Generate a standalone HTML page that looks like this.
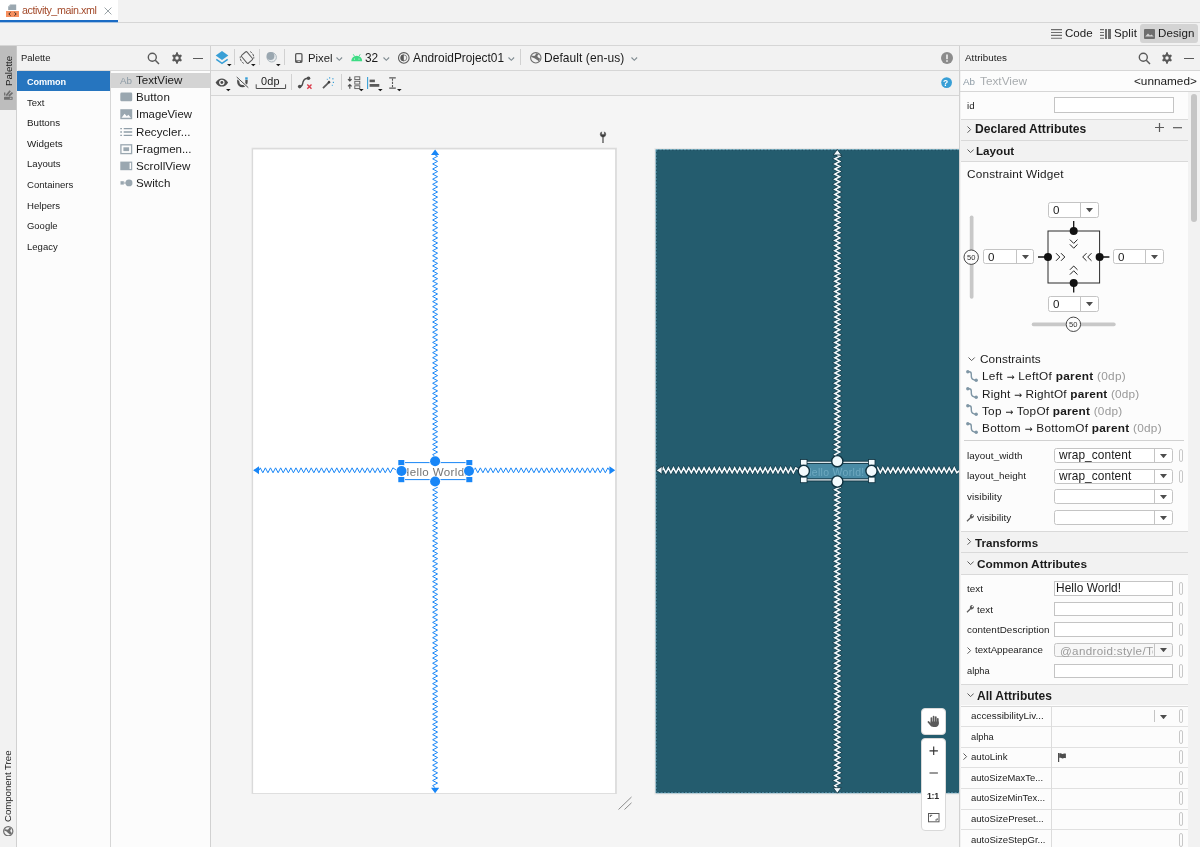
<!DOCTYPE html><html><head><meta charset="utf-8"><title>activity_main.xml</title><style>html,body{margin:0;padding:0;background:#f2f2f2;}#app{position:relative;width:1200px;height:847px;overflow:hidden;background:#f2f2f2;font-family:"Liberation Sans", sans-serif;}#app div,#app svg,#app span.t{position:absolute;display:block;box-sizing:border-box;}#app span.t{white-space:pre;line-height:1;will-change:transform;}#app span.t b{font-weight:700;}</style></head><body><div id="app">
<div style="left:0px;top:0px;width:117.8px;height:20px;background:#ffffff;"></div>
<div style="left:0px;top:20px;width:117.8px;height:2px;background:#1a6bc4;"></div>
<div style="left:0px;top:22px;width:117.8px;height:0.5px;background:#1a6bc4;opacity:.35;"></div>
<div style="left:117.5px;top:22px;width:1082.5px;height:1px;background:#d6d6d6;"></div>
<svg style="left:6px;top:4px;" width="13" height="13" viewBox="0 0 13 13"><path d="M4.200 .4h6v5.600H2.200V2.400z" fill="#9aa7b0"/><path d="M2.200 2.400h2V.4z" fill="#c3cbd0"/><rect x="0" y="7" width="13" height="6" fill="#f26522" opacity=".72"/><path d="M4.600 8.300 2.800 10l1.800 1.700M8.400 8.300l1.800 1.700-1.800 1.700" stroke="#3b2a20" stroke-width="1" fill="none"/></svg>
<span class="t" id="t0" style="left:22.3px;top:5.2px;font-size:10.73px;color:#a34a2b;letter-spacing:-0.424px;">activity_main.xml</span>
<svg style="left:103.5px;top:6.5px;" width="8" height="8" viewBox="0 0 8 8"><path d="M.6 .6l6.800 6.800M7.400 .6l-6.800 6.800" stroke="#8e989d" stroke-width=".9"/></svg>
<div style="left:0px;top:45px;width:1200px;height:1px;background:#d6d6d6;"></div>
<div style="left:1140px;top:24px;width:58px;height:19px;background:#d4d4d4;border-radius:3px;"></div>
<svg style="left:1051px;top:28.5px;" width="11" height="10" viewBox="0 0 11 10"><path d="M0 .6h11M0 3.5h11M0 6.4h11M0 9.3h11" stroke="#6e6e6e" stroke-width="1.1"/></svg>
<span class="t" id="t1" style="left:1064.8px;top:28.2px;font-size:11.58px;color:#1a1a1a;letter-spacing:0.003px;">Code</span>
<svg style="left:1100px;top:28.5px;" width="11" height="10" viewBox="0 0 11 10"><path d="M0 .6h4M0 3.5h4M0 6.4h4M0 9.3h4" stroke="#6e6e6e" stroke-width="1.1"/><rect x="5" y="0" width="2" height="10" fill="#6e6e6e"/><rect x="8" y="0" width="3" height="10" fill="#6e6e6e"/></svg>
<span class="t" id="t2" style="left:1113.8px;top:28.2px;font-size:11.58px;color:#1a1a1a;letter-spacing:0.094px;">Split</span>
<svg style="left:1144px;top:28.5px;" width="11" height="10" viewBox="0 0 11 10"><rect x="0" y="0" width="11" height="10" rx="1" fill="#6e6e6e"/><path d="M1.2 7.6 4 4.6l2 2 1.4-1.2 2.4 2.2z" fill="#d4d4d4"/></svg>
<span class="t" id="t3" style="left:1157.8px;top:28.2px;font-size:11.58px;color:#1a1a1a;letter-spacing:0.059px;">Design</span>
<div style="left:0px;top:46px;width:16px;height:63.5px;background:#bdbdbd;"></div>
<div style="left:16px;top:46px;width:1px;height:63.5px;background:#c9c9c9;"></div>
<span class="t" id="t4" style="left:4.3px;top:86.3px;font-size:9.7px;color:#1a1a1a;transform-origin:0 0;transform:rotate(-90deg);letter-spacing:0.004px;">Palette</span>
<svg style="left:0px;top:0px;" width="1200" height="847" viewBox="0 0 1200 847"><rect x="4" y="96.800" width="8.600" height="3" rx=".6" fill="#6e6e6e"/><rect x="9.800" y="97.700" width="1.800" height="1.200" fill="#bdbdbd"/><path d="M6.300 95.600 10.200 90.800M8.800 96 12.500 92.700" stroke="#6e6e6e" stroke-width="1.700"/><path d="M4.700 95.400v-3" stroke="#6e6e6e" stroke-width="1.300"/></svg>
<span class="t" id="t5" style="left:3.4px;top:821.5px;font-size:9.6px;color:#1a1a1a;transform-origin:0 0;transform:rotate(-90deg);letter-spacing:0.002px;">Component Tree</span>
<svg style="left:3px;top:825.5px;" width="10.5" height="10.5" viewBox="0 0 10.5 10.5"><circle cx="5.25" cy="5.25" r="4.6" fill="none" stroke="#6e6e6e" stroke-width="1.2"/><path d="M1.5 3.5c1.5-.5 2.5.5 3.5 0s1-2 2-2l1.5 1.5c-1 .5-1.5 1.5-1 2.5s1.500 1 1.5 2L7 9c-.5-1.500-2-1.500-2.500-2.500S3 5 1.500 5z" fill="#6e6e6e"/></svg>
<div style="left:16px;top:109.5px;width:1px;height:737.5px;background:#d1d1d1;"></div>
<div style="left:17px;top:70.5px;width:193px;height:776.5px;background:#fcfcfc;"></div>
<div style="left:17.5px;top:70px;width:192.5px;height:0.6px;background:#d9d9d9;"></div>
<div style="left:110px;top:70.5px;width:1px;height:776.5px;background:#d6d6d6;"></div>
<div style="left:210px;top:46px;width:1px;height:801px;background:#d1d1d1;"></div>
<span class="t" id="t6" style="left:21px;top:53.2px;font-size:9.48px;color:#1a1a1a;letter-spacing:0.002px;">Palette</span>
<svg style="left:147px;top:51.5px;" width="13" height="13" viewBox="0 0 13 13"><circle cx="5.3" cy="5.3" r="4" fill="none" stroke="#5a5a5a" stroke-width="1.4"/><path d="M8.300 8.300 12 12" stroke="#5a5a5a" stroke-width="1.500"/></svg>
<svg style="left:170.5px;top:52px;" width="12" height="12" viewBox="0 0 12 12"><g fill="#5a5a5a"><path d="M6.500 0h-1.500l-.4 1.700a4 4 0 0 0-1.200.7L1.800 1.800.8 3.500l1.300 1.200a4 4 0 0 0 0 1.400L.8 7.300l1 1.700 1.600-.6a4 4 0 0 0 1.200.7L5 10.800h1.500z" transform="translate(.25 .6)"/><path d="M5 0h1.500l.4 1.700a4 4 0 0 1 1.200.7l1.600-.6 1 1.700-1.300 1.200a4 4 0 0 1 0 1.400l1.300 1.200-1 1.700-1.600-.6a4 4 0 0 1-1.200.7L6.500 10.800H5z" transform="translate(.25 .6)"/></g><circle cx="6" cy="6" r="1.700" fill="#f2f2f2"/></svg>
<div style="left:193px;top:57.5px;width:10px;height:1.3px;background:#5a5a5a;"></div>
<div style="left:17px;top:70.5px;width:93px;height:20px;background:#2675bf;"></div>
<span class="t" id="t7" style="left:26.5px;top:78.2px;font-size:9.12px;color:#ffffff;font-weight:700;letter-spacing:-0.081px;">Common</span>
<span class="t" id="t8" style="left:26.5px;top:98.2px;font-size:9.49px;color:#1a1a1a;letter-spacing:-0.002px;">Text</span>
<span class="t" id="t9" style="left:26.5px;top:118.2px;font-size:9.76px;color:#1a1a1a;letter-spacing:0.003px;">Buttons</span>
<span class="t" id="t10" style="left:26.5px;top:139.2px;font-size:9.84px;color:#1a1a1a;letter-spacing:0.026px;">Widgets</span>
<span class="t" id="t11" style="left:26.5px;top:159.2px;font-size:9.57px;color:#1a1a1a;">Layouts</span>
<span class="t" id="t12" style="left:26.5px;top:180.2px;font-size:9.58px;color:#1a1a1a;letter-spacing:-0.003px;">Containers</span>
<span class="t" id="t13" style="left:26.5px;top:201.2px;font-size:9.61px;color:#1a1a1a;letter-spacing:0.005px;">Helpers</span>
<span class="t" id="t14" style="left:26.5px;top:221.2px;font-size:9.46px;color:#1a1a1a;letter-spacing:0.003px;">Google</span>
<span class="t" id="t15" style="left:26.5px;top:242.2px;font-size:9.53px;color:#1a1a1a;letter-spacing:0.002px;">Legacy</span>
<div style="left:110.5px;top:72.5px;width:99.5px;height:15.5px;background:#d4d4d4;"></div>
<span class="t" id="t16" style="left:136.1px;top:75.2px;font-size:11.58px;color:#1a1a1a;letter-spacing:0.034px;">TextView</span>
<span class="t" id="t17" style="left:136.1px;top:92.2px;font-size:11.58px;color:#1a1a1a;letter-spacing:0.069px;">Button</span>
<span class="t" id="t18" style="left:136.1px;top:109.2px;font-size:11.34px;color:#1a1a1a;letter-spacing:0.006px;">ImageView</span>
<span class="t" id="t19" style="left:136.1px;top:127.2px;font-size:11.58px;color:#1a1a1a;letter-spacing:0.032px;">Recycler...</span>
<span class="t" id="t20" style="left:136.1px;top:144.2px;font-size:11.48px;color:#1a1a1a;letter-spacing:0.005px;">Fragmen...</span>
<span class="t" id="t21" style="left:136.1px;top:161.2px;font-size:11.58px;color:#1a1a1a;letter-spacing:0.056px;">ScrollView</span>
<span class="t" id="t22" style="left:136.1px;top:178.2px;font-size:11.58px;color:#1a1a1a;letter-spacing:0.048px;">Switch</span>
<span class="t" id="t23" style="left:120px;top:76.2px;font-size:9.88px;color:#8d9ba5;letter-spacing:-0.147px;">Ab</span>
<svg style="left:120px;top:92.2px;" width="13" height="11" viewBox="0 0 13 11"><rect x=".3" y=".6" width="11.900" height="8.600" rx="1.300" fill="#9aa7b0"/></svg>
<svg style="left:120px;top:109.4px;" width="13" height="11" viewBox="0 0 13 11"><path d="M.3 .2h11.900v10H.3z" fill="#9aa7b0"/><path d="M1.500 8.700 4.600 4.700l2.200 2.600 1.500-1.500 2.700 2.900z" fill="#fcfcfc"/></svg>
<svg style="left:120px;top:126.6px;" width="13" height="11" viewBox="0 0 13 11"><path d="M.3 1.700h1.600M.3 5h1.600M.3 8.300h1.600M3.700 1.700h8.500M3.700 5h8.500M3.700 8.300h8.500" stroke="#8f9da7" stroke-width="1.300"/></svg>
<svg style="left:120px;top:143.8px;" width="13" height="11" viewBox="0 0 13 11"><rect x=".9" y=".8" width="10.700" height="8.800" fill="none" stroke="#9aa7b0" stroke-width="1.300"/><rect x="3.400" y="3.300" width="5.700" height="3.800" fill="#9aa7b0"/></svg>
<svg style="left:120px;top:161.0px;" width="13" height="11" viewBox="0 0 13 11"><rect x=".3" y=".6" width="11.900" height="8.600" fill="#9aa7b0"/><rect x="9.600" y="1.800" width="1.500" height="6.200" fill="#fcfcfc"/></svg>
<svg style="left:120px;top:178.2px;" width="13" height="11" viewBox="0 0 13 11"><rect x=".5" y="3.200" width="3.300" height="3.400" fill="#9aa7b0"/><rect x="3.800" y="3.800" width="2.500" height="2.200" fill="#9aa7b0" opacity=".55"/><circle cx="9" cy="4.900" r="3.450" fill="#9aa7b0"/></svg>
<div style="left:210.5px;top:70px;width:749.5px;height:1px;background:#d6d6d6;"></div>
<div style="left:210.5px;top:95px;width:749.5px;height:1px;background:#d6d6d6;"></div>
<svg style="left:0px;top:0px;" width="1200" height="847" viewBox="0 0 1200 847"><path d="M222 51 228.300 55.500 222 60 215.700 55.500z" fill="#389fd6"/><path d="M216.300 59.300 222 63.400 227.700 59.300" fill="none" stroke="#389fd6" stroke-width="1.500"/></svg>
<svg style="left:226.5px;top:63.8px;" width="5" height="3" viewBox="0 0 5 3"><path d="M0 0h4.600L2.300 2.300z" fill="#1a1a1a"/></svg>
<div style="left:234px;top:49px;width:1px;height:16px;background:#d1d1d1;"></div>
<svg style="left:0px;top:0px;" width="1200" height="847" viewBox="0 0 1200 847"><g fill="none" stroke="#5a5a5a" stroke-width="1"><rect x="243.450" y="52.300" width="7.100" height="10.400" rx="1.200" transform="rotate(-40 247 57.500)"/><path d="M250.200 51.600A6.800 6.800 0 0 1 253.700 58.600M243.800 63.400A6.800 6.800 0 0 1 240.300 56.400" stroke-dasharray="2.600 .7"/></g></svg>
<svg style="left:250.7px;top:63.8px;" width="5" height="3" viewBox="0 0 5 3"><path d="M0 0h4.600L2.300 2.300z" fill="#1a1a1a"/></svg>
<div style="left:259px;top:49px;width:1px;height:16px;background:#d1d1d1;"></div>
<svg style="left:0px;top:0px;" width="1200" height="847" viewBox="0 0 1200 847"><circle cx="271.700" cy="57.300" r="4.700" fill="#e6eaec" stroke="#aab5bc" stroke-width="1"/><circle cx="270.500" cy="56" r="3.900" fill="#9aa7b0"/></svg>
<svg style="left:276.0px;top:63.8px;" width="5" height="3" viewBox="0 0 5 3"><path d="M0 0h4.600L2.300 2.300z" fill="#1a1a1a"/></svg>
<div style="left:284px;top:49px;width:1px;height:16px;background:#d1d1d1;"></div>
<svg style="left:295.3px;top:52.8px;" width="8" height="10" viewBox="0 0 8 10"><rect x=".65" y=".65" width="6.300" height="8.600" rx="1" fill="none" stroke="#5a5a5a" stroke-width="1.300"/><rect x=".65" y="7.300" width="6.300" height="2" fill="#5a5a5a"/><rect x="2.600" y="8" width="2.400" height=".7" fill="#f2f2f2"/></svg>
<span class="t" id="t24" style="left:307.5px;top:53.2px;font-size:11.31px;color:#1a1a1a;">Pixel</span>
<svg style="left:336px;top:57.4px;" width="7" height="4.5" viewBox="0 0 7 4.5"><path d="M.5 .5 3.300 3.300 6.100 .5" fill="none" stroke="#7f8b91" stroke-width="1.100"/></svg>
<svg style="left:351px;top:54px;" width="11.5" height="7.5" viewBox="0 0 11.5 7.5"><path d="M.3 7.200A5.450 5.450 0 0 1 11.200 7.200z" fill="#3ddc84"/><path d="M2.300 .3 3.600 2.500M9.200 .3 7.900 2.500" stroke="#3ddc84" stroke-width=".9"/><circle cx="3.500" cy="5" r=".6" fill="#f2f2f2"/><circle cx="8" cy="5" r=".6" fill="#f2f2f2"/></svg>
<span class="t" id="t25" style="left:365.1px;top:53.2px;font-size:11.87px;color:#1a1a1a;letter-spacing:-0.002px;">32</span>
<svg style="left:383px;top:57.4px;" width="7" height="4.5" viewBox="0 0 7 4.5"><path d="M.5 .5 3.300 3.300 6.100 .5" fill="none" stroke="#7f8b91" stroke-width="1.100"/></svg>
<svg style="left:0px;top:0px;" width="1200" height="847" viewBox="0 0 1200 847"><circle cx="403.800" cy="57.900" r="5.300" fill="none" stroke="#5a5a5a" stroke-width="1.100"/><path d="M403.800 54.600a3.300 3.300 0 0 0 0 6.600z" fill="#5a5a5a"/><circle cx="403.800" cy="57.900" r="3" fill="none" stroke="#5a5a5a" stroke-width=".7"/></svg>
<span class="t" id="t26" style="left:412.5px;top:53.2px;font-size:11.87px;color:#1a1a1a;letter-spacing:0.001px;">AndroidProject01</span>
<svg style="left:507.5px;top:57.4px;" width="7" height="4.5" viewBox="0 0 7 4.5"><path d="M.5 .5 3.300 3.300 6.100 .5" fill="none" stroke="#7f8b91" stroke-width="1.100"/></svg>
<div style="left:520px;top:49px;width:1px;height:16px;background:#d1d1d1;"></div>
<svg style="left:529.5px;top:52px;" width="12" height="12" viewBox="0 0 12 12"><circle cx="5.800" cy="5.800" r="5.200" fill="none" stroke="#6e6e6e" stroke-width="1.100"/><path d="M1.300 3.800c1.600-.4 2.400.4 3.400 0s.8-2.200 2-2.600l2.200 1c-1.400.8-1.800 1.800-1.200 2.800s2 .8 2.400 1.800l-1.400 2.600c-.8-1.600-2.200-1.400-3-2.400s-2.400-1-4.400-2z" fill="#6e6e6e"/></svg>
<span class="t" id="t27" style="left:544px;top:52.2px;font-size:11.99px;color:#1a1a1a;letter-spacing:0.069px;">Default (en-us)</span>
<svg style="left:631px;top:57.4px;" width="7" height="4.5" viewBox="0 0 7 4.5"><path d="M.5 .5 3.300 3.300 6.100 .5" fill="none" stroke="#7f8b91" stroke-width="1.100"/></svg>
<svg style="left:940.5px;top:52px;" width="12" height="12" viewBox="0 0 12 12"><circle cx="6" cy="6" r="6" fill="#8c8c8c"/><rect x="5.200" y="2.500" width="1.600" height="4.700" fill="#f2f2f2"/><rect x="5.200" y="8.200" width="1.600" height="1.600" fill="#f2f2f2"/></svg>
<svg style="left:0px;top:0px;" width="1200" height="847" viewBox="0 0 1200 847"><path d="M215.600 82.500C217.400 79.500 219.500 78.400 221.850 78.400s4.450 1.100 6.250 4.100c-1.800 3-3.900 4.100-6.250 4.100s-4.450-1.100-6.250-4.100z" fill="#4d4d4d"/><circle cx="221.850" cy="82.500" r="2.700" fill="#f2f2f2"/><circle cx="221.850" cy="82.500" r="1.450" fill="#4d4d4d"/></svg>
<svg style="left:226.3px;top:88.8px;" width="5" height="3" viewBox="0 0 5 3"><path d="M0 0h4.600L2.300 2.300z" fill="#1a1a1a"/></svg>
<svg style="left:0px;top:0px;" width="1200" height="847" viewBox="0 0 1200 847"><path d="M238.300 79.500v2.600a4.100 4.100 0 0 0 8.200 0v-2" fill="none" stroke="#4d4d4d" stroke-width="2.300"/><rect x="245.200" y="77.300" width="2.500" height="2.400" fill="#389fd6"/><rect x="237.200" y="77.600" width="2" height="1.600" fill="#389fd6"/><path d="M236.700 77 248.300 87.700" stroke="#f2f2f2" stroke-width="2.600"/><path d="M236.700 77 248.300 87.700" stroke="#4d4d4d" stroke-width="1"/></svg>
<span class="t" id="t28" style="left:261.2px;top:76.2px;font-size:10.86px;color:#1a1a1a;letter-spacing:0.158px;">0dp</span>
<svg style="left:255px;top:84px;" width="32" height="5.5" viewBox="0 0 32 5.5"><path d="M1.200 .3v4.200h29.400V.3" fill="none" stroke="#4d4d4d" stroke-width="1"/></svg>
<div style="left:291px;top:74px;width:1px;height:16px;background:#d1d1d1;"></div>
<svg style="left:0px;top:0px;" width="1200" height="847" viewBox="0 0 1200 847"><path d="M299.800 86.600c3 0 2.600-2.600 3.300-4.800s1.700-3.600 5-3.600" fill="none" stroke="#4d4d4d" stroke-width="1.400"/><circle cx="299.700" cy="86.600" r="1.800" fill="#4d4d4d"/><circle cx="308.500" cy="78.200" r="1.800" fill="#4d4d4d"/><path d="M307.300 84.600l4.200 4.200M311.500 84.600l-4.200 4.200" stroke="#db3b4b" stroke-width="1.400"/></svg>
<svg style="left:321.5px;top:76.5px;" width="12.5" height="12.5" viewBox="0 0 12.5 12.5"><path d="M1 11.200 7.600 4.600" stroke="#5a5a5a" stroke-width="1.800"/><path d="M6.200 6 7.800 4.400" stroke="#3a3a3a" stroke-width="2.200"/><g fill="#389fd6"><rect x="7" y=".3" width="1.200" height="1.200"/><rect x="10.300" y="1.200" width="1.200" height="1.200"/><rect x="4.800" y="1.800" width="1" height="1"/><rect x="10.800" y="4.800" width="1.200" height="1.200"/><rect x="9.800" y="7.800" width="1" height="1"/></g></svg>
<div style="left:341.2px;top:74px;width:1px;height:16px;background:#d1d1d1;"></div>
<svg style="left:0px;top:0px;" width="1200" height="847" viewBox="0 0 1200 847"><g fill="none" stroke="#5a5a5a" stroke-width=".9"><rect x="354.800" y="76.800" width="5" height="2.800"/><rect x="354.800" y="81.300" width="5" height="2.800"/><rect x="354.800" y="85.800" width="5" height="2.800"/></g><path d="M349.800 76.800v4M348 79.200l1.800 1.800 1.800-1.800M349.800 88.800v-4M348 86.400l1.800-1.800 1.800 1.800" fill="none" stroke="#4d4d4d" stroke-width="1.200"/></svg>
<svg style="left:358.5px;top:88.8px;" width="5" height="3" viewBox="0 0 5 3"><path d="M0 0h4.600L2.300 2.300z" fill="#1a1a1a"/></svg>
<svg style="left:367px;top:76.5px;" width="13" height="12" viewBox="0 0 13 12"><path d="M.6 0v12" stroke="#389fd6" stroke-width="1.100"/><rect x="2.600" y="2.600" width="5.300" height="2.600" fill="#5a5a5a"/><rect x="2.600" y="7" width="9.700" height="2.800" fill="#5a5a5a"/></svg>
<svg style="left:378.0px;top:88.8px;" width="5" height="3" viewBox="0 0 5 3"><path d="M0 0h4.600L2.300 2.300z" fill="#1a1a1a"/></svg>
<svg style="left:388.5px;top:76.5px;" width="7" height="12" viewBox="0 0 7 12"><path d="M.2 .8h6.600M.2 11.200h6.600" stroke="#5a5a5a" stroke-width="1.300"/><path d="M3.500 1.500v9" stroke="#5a5a5a" stroke-width="1.100" stroke-dasharray="2.200 1.100"/></svg>
<svg style="left:397.0px;top:88.8px;" width="5" height="3" viewBox="0 0 5 3"><path d="M0 0h4.600L2.300 2.300z" fill="#1a1a1a"/></svg>
<svg style="left:941px;top:77px;" width="11.5" height="11.5" viewBox="0 0 11.5 11.5"><circle cx="5.600" cy="5.600" r="5.400" fill="#389fd6"/></svg>
<span class="t" id="t29" style="left:943.3px;top:79.2px;font-size:8.5px;color:#ffffff;font-weight:700;">?</span>
<div style="left:210.5px;top:95.5px;width:749.5px;height:751.5px;background:#f5f5f5;"></div>
<div style="left:210.5px;top:95px;width:749.5px;height:1px;background:#d6d6d6;"></div>
<svg style="left:599px;top:130.5px;" width="8" height="12.5" viewBox="0 0 8 12.5"><path d="M3.700 12V6.300A3 3 0 0 1 1.200 3.300 3 3 0 0 1 2.600 .8v2.600h2.800V.8A3 3 0 0 1 6.800 3.300 3 3 0 0 1 4.300 6.300V12z" fill="#3c3c3c" stroke="#3c3c3c" stroke-width=".4" stroke-linejoin="round"/></svg>
<svg style="left:0px;top:0px;" width="1200" height="847" viewBox="0 0 1200 847"><rect x="251.600" y="147.700" width="365.400" height="646.300" fill="#d0d0d0" opacity=".55"/><rect x="252.400" y="148.500" width="363.800" height="645" fill="#d6d6d6"/><rect x="253.100" y="149.400" width="362.100" height="643.700" fill="#ffffff"/></svg>
<svg style="left:0px;top:0px;pointer-events:none;" width="1200" height="847" viewBox="0 0 1200 847"><polyline points="435.10,155.00 437.55,156.28 432.65,158.83 437.55,161.38 432.65,163.93 437.55,166.48 432.65,169.03 437.55,171.58 432.65,174.13 437.55,176.68 432.65,179.23 437.55,181.78 432.65,184.33 437.55,186.88 432.65,189.43 437.55,191.98 432.65,194.53 437.55,197.08 432.65,199.63 437.55,202.18 432.65,204.73 437.55,207.28 432.65,209.83 437.55,212.38 432.65,214.93 437.55,217.48 432.65,220.03 437.55,222.58 432.65,225.13 437.55,227.68 432.65,230.23 437.55,232.78 432.65,235.33 437.55,237.88 432.65,240.43 437.55,242.98 432.65,245.53 437.55,248.08 432.65,250.63 437.55,253.18 432.65,255.73 437.55,258.28 432.65,260.83 437.55,263.38 432.65,265.93 437.55,268.48 432.65,271.03 437.55,273.58 432.65,276.13 437.55,278.68 432.65,281.23 437.55,283.78 432.65,286.33 437.55,288.88 432.65,291.43 437.55,293.98 432.65,296.53 437.55,299.08 432.65,301.63 437.55,304.18 432.65,306.73 437.55,309.28 432.65,311.83 437.55,314.38 432.65,316.93 437.55,319.48 432.65,322.03 437.55,324.58 432.65,327.13 437.55,329.68 432.65,332.23 437.55,334.78 432.65,337.33 437.55,339.88 432.65,342.43 437.55,344.98 432.65,347.53 437.55,350.08 432.65,352.63 437.55,355.18 432.65,357.73 437.55,360.28 432.65,362.83 437.55,365.38 432.65,367.93 437.55,370.48 432.65,373.03 437.55,375.58 432.65,378.13 437.55,380.68 432.65,383.23 437.55,385.78 432.65,388.33 437.55,390.88 432.65,393.43 437.55,395.98 432.65,398.53 437.55,401.08 432.65,403.63 437.55,406.18 432.65,408.73 437.55,411.28 432.65,413.83 437.55,416.38 432.65,418.93 437.55,421.48 432.65,424.03 437.55,426.58 432.65,429.13 437.55,431.68 432.65,434.23 437.55,436.78 432.65,439.33 437.55,441.88 432.65,444.43 437.55,446.98 432.65,449.53 437.55,452.08 432.65,454.63 435.10,456.50" fill="none" stroke="#1886f7" stroke-width="1"/><polyline points="435.10,486.00 437.55,487.27 432.65,489.82 437.55,492.38 432.65,494.93 437.55,497.48 432.65,500.03 437.55,502.58 432.65,505.13 437.55,507.68 432.65,510.23 437.55,512.78 432.65,515.33 437.55,517.88 432.65,520.42 437.55,522.97 432.65,525.52 437.55,528.07 432.65,530.62 437.55,533.17 432.65,535.72 437.55,538.27 432.65,540.82 437.55,543.37 432.65,545.92 437.55,548.47 432.65,551.02 437.55,553.57 432.65,556.12 437.55,558.67 432.65,561.22 437.55,563.77 432.65,566.32 437.55,568.87 432.65,571.42 437.55,573.97 432.65,576.52 437.55,579.07 432.65,581.62 437.55,584.17 432.65,586.72 437.55,589.27 432.65,591.82 437.55,594.37 432.65,596.92 437.55,599.47 432.65,602.02 437.55,604.57 432.65,607.12 437.55,609.67 432.65,612.22 437.55,614.77 432.65,617.32 437.55,619.87 432.65,622.42 437.55,624.97 432.65,627.52 437.55,630.07 432.65,632.62 437.55,635.17 432.65,637.72 437.55,640.27 432.65,642.82 437.55,645.37 432.65,647.92 437.55,650.47 432.65,653.02 437.55,655.57 432.65,658.12 437.55,660.67 432.65,663.22 437.55,665.77 432.65,668.32 437.55,670.87 432.65,673.42 437.55,675.97 432.65,678.52 437.55,681.07 432.65,683.62 437.55,686.17 432.65,688.72 437.55,691.27 432.65,693.82 437.55,696.37 432.65,698.92 437.55,701.47 432.65,704.02 437.55,706.57 432.65,709.12 437.55,711.67 432.65,714.22 437.55,716.77 432.65,719.32 437.55,721.87 432.65,724.42 437.55,726.97 432.65,729.52 437.55,732.07 432.65,734.62 437.55,737.17 432.65,739.72 437.55,742.27 432.65,744.82 437.55,747.37 432.65,749.92 437.55,752.47 432.65,755.02 437.55,757.57 432.65,760.12 437.55,762.67 432.65,765.22 437.55,767.77 432.65,770.32 437.55,772.87 432.65,775.42 437.55,777.97 432.65,780.52 437.55,783.07 432.65,785.62 435.10,787.50" fill="none" stroke="#1886f7" stroke-width="1"/><polyline points="259.00,470.30 260.27,467.85 262.82,472.75 265.38,467.85 267.93,472.75 270.48,467.85 273.03,472.75 275.58,467.85 278.13,472.75 280.68,467.85 283.23,472.75 285.78,467.85 288.33,472.75 290.88,467.85 293.43,472.75 295.98,467.85 298.53,472.75 301.08,467.85 303.63,472.75 306.18,467.85 308.73,472.75 311.28,467.85 313.83,472.75 316.38,467.85 318.93,472.75 321.48,467.85 324.03,472.75 326.58,467.85 329.13,472.75 331.68,467.85 334.23,472.75 336.78,467.85 339.33,472.75 341.88,467.85 344.43,472.75 346.98,467.85 349.53,472.75 352.08,467.85 354.63,472.75 357.18,467.85 359.73,472.75 362.28,467.85 364.83,472.75 367.38,467.85 369.93,472.75 372.48,467.85 375.03,472.75 377.58,467.85 380.13,472.75 382.68,467.85 385.23,472.75 387.78,467.85 390.33,472.75 392.88,467.85 396.50,470.30" fill="none" stroke="#1886f7" stroke-width="1"/><polyline points="474.00,470.30 475.27,467.85 477.82,472.75 480.38,467.85 482.93,472.75 485.48,467.85 488.03,472.75 490.58,467.85 493.13,472.75 495.68,467.85 498.23,472.75 500.78,467.85 503.33,472.75 505.88,467.85 508.43,472.75 510.98,467.85 513.53,472.75 516.08,467.85 518.62,472.75 521.17,467.85 523.72,472.75 526.27,467.85 528.82,472.75 531.37,467.85 533.92,472.75 536.47,467.85 539.02,472.75 541.57,467.85 544.12,472.75 546.67,467.85 549.22,472.75 551.77,467.85 554.32,472.75 556.87,467.85 559.42,472.75 561.97,467.85 564.52,472.75 567.07,467.85 569.62,472.75 572.17,467.85 574.72,472.75 577.27,467.85 579.82,472.75 582.37,467.85 584.92,472.75 587.47,467.85 590.02,472.75 592.57,467.85 595.12,472.75 597.67,467.85 600.22,472.75 602.77,467.85 605.32,472.75 607.87,467.85 609.50,470.30" fill="none" stroke="#1886f7" stroke-width="1"/><path d="M435.1 149.500l4.100 5.500h-8.200zM435.1 793.200l4.100-5.500h-8.200zM253.200 470.3l5.800-4v8zM615.200 470.3l-5.800-4v8z" fill="#1886f7"/><rect x="401.300" y="462.600" width="68" height="17" fill="none" stroke="#1886f7" stroke-width="1"/><rect x="398.3" y="460.0" width="6" height="5.200" fill="#1886f7" stroke="#fff" stroke-width="1.400" paint-order="stroke"/><rect x="466.3" y="460.0" width="6" height="5.200" fill="#1886f7" stroke="#fff" stroke-width="1.400" paint-order="stroke"/><rect x="398.3" y="477.0" width="6" height="5.200" fill="#1886f7" stroke="#fff" stroke-width="1.400" paint-order="stroke"/><rect x="466.3" y="477.0" width="6" height="5.200" fill="#1886f7" stroke="#fff" stroke-width="1.400" paint-order="stroke"/></svg>
<span class="t" id="t30" style="left:400.8px;top:467.2px;font-size:11.58px;color:#757575;letter-spacing:0.346px;">Hello World!</span>
<svg style="left:0px;top:0px;pointer-events:none;" width="1200" height="847" viewBox="0 0 1200 847"><circle cx="435.1" cy="461.2" r="5" fill="#1886f7" stroke="#fff" stroke-width="1.600" paint-order="stroke"/><circle cx="435.1" cy="481.5" r="5" fill="#1886f7" stroke="#fff" stroke-width="1.600" paint-order="stroke"/><circle cx="401.5" cy="471" r="5" fill="#1886f7" stroke="#fff" stroke-width="1.600" paint-order="stroke"/><circle cx="469" cy="471" r="5" fill="#1886f7" stroke="#fff" stroke-width="1.600" paint-order="stroke"/></svg>
<svg style="left:0px;top:0px;" width="1200" height="847" viewBox="0 0 1200 847"><rect x="654.300" y="148" width="310" height="646.600" fill="#dcdcdc" opacity=".45"/><rect x="655.700" y="149.400" width="310" height="643.800" fill="#245c6e"/><rect x="656.600" y="150.300" width="310" height="642" fill="none" stroke="#1b4a5b" stroke-width=".8" opacity=".8"/><rect x="656" y="149.700" width="310" height="643.200" fill="none" stroke="#86cbe6" stroke-width=".7" stroke-dasharray="2.200 1.300"/></svg>
<svg style="left:0px;top:0px;pointer-events:none;" width="1200" height="847" viewBox="0 0 1200 847"><polyline points="837.30,155.00 839.75,156.28 834.85,158.83 839.75,161.38 834.85,163.93 839.75,166.48 834.85,169.03 839.75,171.58 834.85,174.13 839.75,176.68 834.85,179.23 839.75,181.78 834.85,184.33 839.75,186.88 834.85,189.43 839.75,191.98 834.85,194.53 839.75,197.08 834.85,199.63 839.75,202.18 834.85,204.73 839.75,207.28 834.85,209.83 839.75,212.38 834.85,214.93 839.75,217.48 834.85,220.03 839.75,222.58 834.85,225.13 839.75,227.68 834.85,230.23 839.75,232.78 834.85,235.33 839.75,237.88 834.85,240.43 839.75,242.98 834.85,245.53 839.75,248.08 834.85,250.63 839.75,253.18 834.85,255.73 839.75,258.28 834.85,260.83 839.75,263.38 834.85,265.93 839.75,268.48 834.85,271.03 839.75,273.58 834.85,276.13 839.75,278.68 834.85,281.23 839.75,283.78 834.85,286.33 839.75,288.88 834.85,291.43 839.75,293.98 834.85,296.53 839.75,299.08 834.85,301.63 839.75,304.18 834.85,306.73 839.75,309.28 834.85,311.83 839.75,314.38 834.85,316.93 839.75,319.48 834.85,322.03 839.75,324.58 834.85,327.13 839.75,329.68 834.85,332.23 839.75,334.78 834.85,337.33 839.75,339.88 834.85,342.43 839.75,344.98 834.85,347.53 839.75,350.08 834.85,352.63 839.75,355.18 834.85,357.73 839.75,360.28 834.85,362.83 839.75,365.38 834.85,367.93 839.75,370.48 834.85,373.03 839.75,375.58 834.85,378.13 839.75,380.68 834.85,383.23 839.75,385.78 834.85,388.33 839.75,390.88 834.85,393.43 839.75,395.98 834.85,398.53 839.75,401.08 834.85,403.63 839.75,406.18 834.85,408.73 839.75,411.28 834.85,413.83 839.75,416.38 834.85,418.93 839.75,421.48 834.85,424.03 839.75,426.58 834.85,429.13 839.75,431.68 834.85,434.23 839.75,436.78 834.85,439.33 839.75,441.88 834.85,444.43 839.75,446.98 834.85,449.53 839.75,452.08 834.85,454.63 837.30,456.50" fill="none" stroke="#0f303e" stroke-width="2.6"/><polyline points="837.30,486.00 839.75,487.27 834.85,489.82 839.75,492.38 834.85,494.93 839.75,497.48 834.85,500.03 839.75,502.58 834.85,505.13 839.75,507.68 834.85,510.23 839.75,512.78 834.85,515.33 839.75,517.88 834.85,520.42 839.75,522.97 834.85,525.52 839.75,528.07 834.85,530.62 839.75,533.17 834.85,535.72 839.75,538.27 834.85,540.82 839.75,543.37 834.85,545.92 839.75,548.47 834.85,551.02 839.75,553.57 834.85,556.12 839.75,558.67 834.85,561.22 839.75,563.77 834.85,566.32 839.75,568.87 834.85,571.42 839.75,573.97 834.85,576.52 839.75,579.07 834.85,581.62 839.75,584.17 834.85,586.72 839.75,589.27 834.85,591.82 839.75,594.37 834.85,596.92 839.75,599.47 834.85,602.02 839.75,604.57 834.85,607.12 839.75,609.67 834.85,612.22 839.75,614.77 834.85,617.32 839.75,619.87 834.85,622.42 839.75,624.97 834.85,627.52 839.75,630.07 834.85,632.62 839.75,635.17 834.85,637.72 839.75,640.27 834.85,642.82 839.75,645.37 834.85,647.92 839.75,650.47 834.85,653.02 839.75,655.57 834.85,658.12 839.75,660.67 834.85,663.22 839.75,665.77 834.85,668.32 839.75,670.87 834.85,673.42 839.75,675.97 834.85,678.52 839.75,681.07 834.85,683.62 839.75,686.17 834.85,688.72 839.75,691.27 834.85,693.82 839.75,696.37 834.85,698.92 839.75,701.47 834.85,704.02 839.75,706.57 834.85,709.12 839.75,711.67 834.85,714.22 839.75,716.77 834.85,719.32 839.75,721.87 834.85,724.42 839.75,726.97 834.85,729.52 839.75,732.07 834.85,734.62 839.75,737.17 834.85,739.72 839.75,742.27 834.85,744.82 839.75,747.37 834.85,749.92 839.75,752.47 834.85,755.02 839.75,757.57 834.85,760.12 839.75,762.67 834.85,765.22 839.75,767.77 834.85,770.32 839.75,772.87 834.85,775.42 839.75,777.97 834.85,780.52 839.75,783.07 834.85,785.62 837.30,787.50" fill="none" stroke="#0f303e" stroke-width="2.6"/><polyline points="662.00,470.30 663.27,467.85 665.82,472.75 668.37,467.85 670.92,472.75 673.47,467.85 676.02,472.75 678.57,467.85 681.12,472.75 683.67,467.85 686.22,472.75 688.77,467.85 691.32,472.75 693.87,467.85 696.42,472.75 698.97,467.85 701.52,472.75 704.07,467.85 706.62,472.75 709.17,467.85 711.72,472.75 714.27,467.85 716.82,472.75 719.37,467.85 721.92,472.75 724.47,467.85 727.02,472.75 729.57,467.85 732.12,472.75 734.67,467.85 737.22,472.75 739.77,467.85 742.32,472.75 744.87,467.85 747.42,472.75 749.97,467.85 752.52,472.75 755.07,467.85 757.62,472.75 760.17,467.85 762.72,472.75 765.27,467.85 767.82,472.75 770.37,467.85 772.92,472.75 775.47,467.85 778.02,472.75 780.57,467.85 783.12,472.75 785.67,467.85 788.22,472.75 790.77,467.85 793.32,472.75 795.87,467.85 799.50,470.30" fill="none" stroke="#0f303e" stroke-width="2.6"/><polyline points="876.50,470.30 877.77,467.85 880.32,472.75 882.87,467.85 885.42,472.75 887.97,467.85 890.52,472.75 893.07,467.85 895.62,472.75 898.17,467.85 900.72,472.75 903.27,467.85 905.82,472.75 908.37,467.85 910.92,472.75 913.47,467.85 916.02,472.75 918.57,467.85 921.12,472.75 923.67,467.85 926.22,472.75 928.77,467.85 931.32,472.75 933.87,467.85 936.42,472.75 938.97,467.85 941.52,472.75 944.07,467.85 946.62,472.75 949.17,467.85 951.72,472.75 954.27,467.85 956.82,472.75 960.00,470.30" fill="none" stroke="#0f303e" stroke-width="2.6"/><polyline points="837.30,155.00 839.75,156.28 834.85,158.83 839.75,161.38 834.85,163.93 839.75,166.48 834.85,169.03 839.75,171.58 834.85,174.13 839.75,176.68 834.85,179.23 839.75,181.78 834.85,184.33 839.75,186.88 834.85,189.43 839.75,191.98 834.85,194.53 839.75,197.08 834.85,199.63 839.75,202.18 834.85,204.73 839.75,207.28 834.85,209.83 839.75,212.38 834.85,214.93 839.75,217.48 834.85,220.03 839.75,222.58 834.85,225.13 839.75,227.68 834.85,230.23 839.75,232.78 834.85,235.33 839.75,237.88 834.85,240.43 839.75,242.98 834.85,245.53 839.75,248.08 834.85,250.63 839.75,253.18 834.85,255.73 839.75,258.28 834.85,260.83 839.75,263.38 834.85,265.93 839.75,268.48 834.85,271.03 839.75,273.58 834.85,276.13 839.75,278.68 834.85,281.23 839.75,283.78 834.85,286.33 839.75,288.88 834.85,291.43 839.75,293.98 834.85,296.53 839.75,299.08 834.85,301.63 839.75,304.18 834.85,306.73 839.75,309.28 834.85,311.83 839.75,314.38 834.85,316.93 839.75,319.48 834.85,322.03 839.75,324.58 834.85,327.13 839.75,329.68 834.85,332.23 839.75,334.78 834.85,337.33 839.75,339.88 834.85,342.43 839.75,344.98 834.85,347.53 839.75,350.08 834.85,352.63 839.75,355.18 834.85,357.73 839.75,360.28 834.85,362.83 839.75,365.38 834.85,367.93 839.75,370.48 834.85,373.03 839.75,375.58 834.85,378.13 839.75,380.68 834.85,383.23 839.75,385.78 834.85,388.33 839.75,390.88 834.85,393.43 839.75,395.98 834.85,398.53 839.75,401.08 834.85,403.63 839.75,406.18 834.85,408.73 839.75,411.28 834.85,413.83 839.75,416.38 834.85,418.93 839.75,421.48 834.85,424.03 839.75,426.58 834.85,429.13 839.75,431.68 834.85,434.23 839.75,436.78 834.85,439.33 839.75,441.88 834.85,444.43 839.75,446.98 834.85,449.53 839.75,452.08 834.85,454.63 837.30,456.50" fill="none" stroke="#f2fafd" stroke-width="1.6"/><polyline points="837.30,486.00 839.75,487.27 834.85,489.82 839.75,492.38 834.85,494.93 839.75,497.48 834.85,500.03 839.75,502.58 834.85,505.13 839.75,507.68 834.85,510.23 839.75,512.78 834.85,515.33 839.75,517.88 834.85,520.42 839.75,522.97 834.85,525.52 839.75,528.07 834.85,530.62 839.75,533.17 834.85,535.72 839.75,538.27 834.85,540.82 839.75,543.37 834.85,545.92 839.75,548.47 834.85,551.02 839.75,553.57 834.85,556.12 839.75,558.67 834.85,561.22 839.75,563.77 834.85,566.32 839.75,568.87 834.85,571.42 839.75,573.97 834.85,576.52 839.75,579.07 834.85,581.62 839.75,584.17 834.85,586.72 839.75,589.27 834.85,591.82 839.75,594.37 834.85,596.92 839.75,599.47 834.85,602.02 839.75,604.57 834.85,607.12 839.75,609.67 834.85,612.22 839.75,614.77 834.85,617.32 839.75,619.87 834.85,622.42 839.75,624.97 834.85,627.52 839.75,630.07 834.85,632.62 839.75,635.17 834.85,637.72 839.75,640.27 834.85,642.82 839.75,645.37 834.85,647.92 839.75,650.47 834.85,653.02 839.75,655.57 834.85,658.12 839.75,660.67 834.85,663.22 839.75,665.77 834.85,668.32 839.75,670.87 834.85,673.42 839.75,675.97 834.85,678.52 839.75,681.07 834.85,683.62 839.75,686.17 834.85,688.72 839.75,691.27 834.85,693.82 839.75,696.37 834.85,698.92 839.75,701.47 834.85,704.02 839.75,706.57 834.85,709.12 839.75,711.67 834.85,714.22 839.75,716.77 834.85,719.32 839.75,721.87 834.85,724.42 839.75,726.97 834.85,729.52 839.75,732.07 834.85,734.62 839.75,737.17 834.85,739.72 839.75,742.27 834.85,744.82 839.75,747.37 834.85,749.92 839.75,752.47 834.85,755.02 839.75,757.57 834.85,760.12 839.75,762.67 834.85,765.22 839.75,767.77 834.85,770.32 839.75,772.87 834.85,775.42 839.75,777.97 834.85,780.52 839.75,783.07 834.85,785.62 837.30,787.50" fill="none" stroke="#f2fafd" stroke-width="1.6"/><polyline points="662.00,470.30 663.27,467.85 665.82,472.75 668.37,467.85 670.92,472.75 673.47,467.85 676.02,472.75 678.57,467.85 681.12,472.75 683.67,467.85 686.22,472.75 688.77,467.85 691.32,472.75 693.87,467.85 696.42,472.75 698.97,467.85 701.52,472.75 704.07,467.85 706.62,472.75 709.17,467.85 711.72,472.75 714.27,467.85 716.82,472.75 719.37,467.85 721.92,472.75 724.47,467.85 727.02,472.75 729.57,467.85 732.12,472.75 734.67,467.85 737.22,472.75 739.77,467.85 742.32,472.75 744.87,467.85 747.42,472.75 749.97,467.85 752.52,472.75 755.07,467.85 757.62,472.75 760.17,467.85 762.72,472.75 765.27,467.85 767.82,472.75 770.37,467.85 772.92,472.75 775.47,467.85 778.02,472.75 780.57,467.85 783.12,472.75 785.67,467.85 788.22,472.75 790.77,467.85 793.32,472.75 795.87,467.85 799.50,470.30" fill="none" stroke="#f2fafd" stroke-width="1.6"/><polyline points="876.50,470.30 877.77,467.85 880.32,472.75 882.87,467.85 885.42,472.75 887.97,467.85 890.52,472.75 893.07,467.85 895.62,472.75 898.17,467.85 900.72,472.75 903.27,467.85 905.82,472.75 908.37,467.85 910.92,472.75 913.47,467.85 916.02,472.75 918.57,467.85 921.12,472.75 923.67,467.85 926.22,472.75 928.77,467.85 931.32,472.75 933.87,467.85 936.42,472.75 938.97,467.85 941.52,472.75 944.07,467.85 946.62,472.75 949.17,467.85 951.72,472.75 954.27,467.85 956.82,472.75 960.00,470.30" fill="none" stroke="#f2fafd" stroke-width="1.6"/><path d="M837.3 149.500l4.100 5.500h-8.200zM837.3 793.200l4.100-5.500h-8.200zM656.200 470.3l5.800-4v8z" fill="#f2fafd" stroke="#0f303e" stroke-width=".8"/><rect x="803.800" y="462.300" width="68" height="17.600" fill="#4a8ba5" stroke="#0f303e" stroke-width="3"/><rect x="803.800" y="462.300" width="68" height="17.600" fill="none" stroke="#f2fafd" stroke-width="1.200"/><rect x="800.6" y="459.5" width="6.400" height="5.600" fill="#f2fafd" stroke="#0f303e" stroke-width=".8"/><rect x="868.6" y="459.5" width="6.400" height="5.600" fill="#f2fafd" stroke="#0f303e" stroke-width=".8"/><rect x="800.6" y="477.1" width="6.400" height="5.600" fill="#f2fafd" stroke="#0f303e" stroke-width=".8"/><rect x="868.6" y="477.1" width="6.400" height="5.600" fill="#f2fafd" stroke="#0f303e" stroke-width=".8"/></svg>
<span class="t" id="t31" style="left:804px;top:468.2px;font-size:10.45px;color:#6ea9c0;letter-spacing:0.320px;">Hello World!</span>
<svg style="left:0px;top:0px;pointer-events:none;" width="1200" height="847" viewBox="0 0 1200 847"><circle cx="837.3" cy="461.2" r="5.600" fill="#f2fafd" stroke="#0f303e" stroke-width="1.400"/><circle cx="837.3" cy="481.5" r="5.600" fill="#f2fafd" stroke="#0f303e" stroke-width="1.400"/><circle cx="803.8" cy="471" r="5.600" fill="#f2fafd" stroke="#0f303e" stroke-width="1.400"/><circle cx="871.5" cy="471" r="5.600" fill="#f2fafd" stroke="#0f303e" stroke-width="1.400"/></svg>
<svg style="left:617px;top:796px;" width="16" height="15" viewBox="0 0 16 15"><path d="M1.500 13.500 14.500 1M7.500 13.500 14.500 6.800" stroke="#8c8c8c" stroke-width="1"/></svg>
<div style="left:921px;top:708px;width:25px;height:27px;background:#ffffff;border:1px solid #d9d9d9;border-radius:4px;"></div>
<div style="left:921px;top:738px;width:25px;height:93px;background:#ffffff;border:1px solid #d9d9d9;border-radius:4px;"></div>
<svg style="left:0px;top:0px;" width="1200" height="847" viewBox="0 0 1200 847"><g stroke="#5a5a5a" stroke-width="1.700" stroke-linecap="round" fill="none"><path d="M931.400 718v5M933.600 716.600v6M935.800 717v6M937.800 718.800v5"/><path d="M928.500 722l3 3.500" stroke-width="1.900"/></g><path d="M930.600 721.500h8.100v2.300c0 1.800-1.300 3.200-3 3.200h-2.200c-1.600 0-2.900-1.400-2.900-3.200z" fill="#5a5a5a"/></svg>
<svg style="left:0px;top:0px;" width="1200" height="847" viewBox="0 0 1200 847"><path d="M933.700 746.600v8.400M929.500 750.800h8.400M929.500 773h8.400" stroke="#333" stroke-width="1.150" fill="none"/></svg>
<span class="t" id="t32" style="left:927.2px;top:792.2px;font-size:8.8px;color:#2b2b2b;font-weight:700;letter-spacing:-.3px;">1:1</span>
<svg style="left:928px;top:813px;" width="12" height="9.5" viewBox="0 0 12 9.5"><rect x=".5" y=".5" width="10.500" height="8.300" fill="none" stroke="#5a5a5a" stroke-width="1"/><path d="M2.300 4V2.300H4.200M9.200 5.300V7H7.300" fill="none" stroke="#5a5a5a" stroke-width="1"/></svg>
<div style="left:959.5px;top:46px;width:240.5px;height:801px;background:#f2f2f2;"></div>
<div style="left:959px;top:46px;width:1px;height:801px;background:#d1d1d1;"></div>
<span class="t" id="t33" style="left:964.5px;top:53.2px;font-size:9.84px;color:#1a1a1a;letter-spacing:0.048px;">Attributes</span>
<svg style="left:1137.5px;top:51.5px;" width="13" height="13" viewBox="0 0 13 13"><circle cx="5.300" cy="5.300" r="4" fill="none" stroke="#5a5a5a" stroke-width="1.400"/><path d="M8.300 8.300 12 12" stroke="#5a5a5a" stroke-width="1.500"/></svg>
<svg style="left:1160.5px;top:52px;" width="12" height="12" viewBox="0 0 12 12"><g fill="#5a5a5a"><path d="M6.500 0h-1.500l-.4 1.700a4 4 0 0 0-1.200.7L1.800 1.800.8 3.500l1.300 1.200a4 4 0 0 0 0 1.400L.8 7.300l1 1.700 1.600-.6a4 4 0 0 0 1.200.7L5 10.800h1.500z" transform="translate(.25 .6)"/><path d="M5 0h1.500l.4 1.700a4 4 0 0 1 1.200.7l1.600-.6 1 1.700-1.300 1.200a4 4 0 0 1 0 1.400l1.300 1.200-1 1.700-1.600-.6a4 4 0 0 1-1.200.7L6.500 10.800H5z" transform="translate(.25 .6)"/></g><circle cx="6" cy="6" r="1.700" fill="#f2f2f2"/></svg>
<div style="left:1184px;top:57.5px;width:10px;height:1.3px;background:#5a5a5a;"></div>
<div style="left:960px;top:70px;width:240px;height:1px;background:#d6d6d6;"></div>
<div style="left:960.5px;top:70.5px;width:239.5px;height:20px;background:#fcfcfc;"></div>
<span class="t" id="t34" style="left:963.3px;top:77.2px;font-size:9.88px;color:#8d9ba5;letter-spacing:-0.047px;">Ab</span>
<span class="t" id="t35" style="left:980px;top:76.2px;font-size:11.8px;color:#a9adb0;">TextView</span>
<span class="t" id="t36" style="left:1133.5px;top:75.2px;font-size:11.77px;color:#1a1a1a;letter-spacing:-0.001px;">&lt;unnamed&gt;</span>
<div style="left:960.5px;top:91px;width:227.5px;height:756px;background:#fcfcfc;"></div>
<div style="left:960px;top:90.5px;width:240px;height:1px;background:#d6d6d6;"></div>
<div style="left:1191px;top:94px;width:6px;height:128px;background:#c6c6c6;border-radius:3px;"></div>
<span class="t" id="t37" style="left:966.5px;top:101.2px;font-size:9.64px;color:#1a1a1a;">id</span>
<div style="left:1054px;top:97px;width:119.5px;height:15.5px;background:#ffffff;border:1px solid #c4c4c4;border-radius:0px;"></div>
<div style="left:960.5px;top:118.5px;width:227.5px;height:21.0px;background:#f2f2f2;"></div>
<div style="left:960.5px;top:118.5px;width:227.5px;height:1px;background:#d9d9d9;"></div>
<div style="left:960.5px;top:139.5px;width:227.5px;height:1px;background:#d9d9d9;"></div>
<svg style="left:967px;top:125.8px;" width="4.5" height="7.5" viewBox="0 0 4.5 7.5"><path d="M.5 .5 3.600 3.600 .5 6.700" fill="none" stroke="#5a5a5a" stroke-width="1"/></svg>
<span class="t" id="t38" style="left:974.5px;top:123.2px;font-size:12.09px;color:#1a1a1a;font-weight:700;letter-spacing:0.017px;">Declared Attributes</span>
<svg style="left:1154.5px;top:123px;" width="9" height="9" viewBox="0 0 9 9"><path d="M4.500 0v9M0 4.500h9" stroke="#5a5a5a" stroke-width="1.200"/></svg>
<svg style="left:1173px;top:126.9px;" width="9" height="2" viewBox="0 0 9 2"><path d="M0 .7h9" stroke="#5a5a5a" stroke-width="1.200"/></svg>
<div style="left:960.5px;top:139.5px;width:227.5px;height:21.5px;background:#f2f2f2;"></div>
<div style="left:960.5px;top:139.5px;width:227.5px;height:1px;background:#d9d9d9;"></div>
<div style="left:960.5px;top:161px;width:227.5px;height:1px;background:#d9d9d9;"></div>
<svg style="left:966.5px;top:148.55px;" width="7.5" height="4.5" viewBox="0 0 7.5 4.5"><path d="M.5 .5 3.600 3.600 6.700 .5" fill="none" stroke="#5a5a5a" stroke-width="1"/></svg>
<span class="t" id="t39" style="left:976.3px;top:145.2px;font-size:11.66px;color:#1a1a1a;font-weight:700;letter-spacing:-0.003px;">Layout</span>
<span class="t" id="t40" style="left:966.5px;top:168.2px;font-size:11.79px;color:#1a1a1a;letter-spacing:0.186px;">Constraint Widget</span>
<div style="left:1048px;top:202.3px;width:51px;height:15.699999999999989px;background:#ffffff;border:1px solid #c4c4c4;border-radius:2.5px;"></div>
<div style="left:1080.2px;top:202.8px;width:1px;height:14.699999999999989px;background:#c4c4c4;"></div>
<svg style="left:1086.3999999999999px;top:208.35px;" width="7" height="4.2" viewBox="0 0 7 4.2"><path d="M0 0h7L3.500 4.200z" fill="#4d4d4d"/></svg>
<div style="left:1048px;top:296.3px;width:51px;height:15.5px;background:#ffffff;border:1px solid #c4c4c4;border-radius:2.5px;"></div>
<div style="left:1080.2px;top:296.8px;width:1px;height:14.5px;background:#c4c4c4;"></div>
<svg style="left:1086.3999999999999px;top:302.25px;" width="7" height="4.2" viewBox="0 0 7 4.2"><path d="M0 0h7L3.500 4.200z" fill="#4d4d4d"/></svg>
<div style="left:983.3px;top:248.8px;width:51.100000000000136px;height:15.599999999999966px;background:#ffffff;border:1px solid #c4c4c4;border-radius:2.5px;"></div>
<div style="left:1015.6px;top:249.3px;width:1px;height:14.599999999999966px;background:#c4c4c4;"></div>
<svg style="left:1021.8px;top:254.8px;" width="7" height="4.2" viewBox="0 0 7 4.2"><path d="M0 0h7L3.500 4.200z" fill="#4d4d4d"/></svg>
<div style="left:1112.5px;top:248.8px;width:51.0px;height:15.599999999999966px;background:#ffffff;border:1px solid #c4c4c4;border-radius:2.5px;"></div>
<div style="left:1144.8px;top:249.3px;width:1px;height:14.599999999999966px;background:#c4c4c4;"></div>
<svg style="left:1150.95px;top:254.8px;" width="7" height="4.2" viewBox="0 0 7 4.2"><path d="M0 0h7L3.500 4.200z" fill="#4d4d4d"/></svg>
<span class="t" id="t41" style="left:1053px;top:204.2px;font-size:11.6px;color:#1a1a1a;">0</span>
<span class="t" id="t42" style="left:1053px;top:298.2px;font-size:11.6px;color:#1a1a1a;">0</span>
<span class="t" id="t43" style="left:988.3px;top:251.2px;font-size:11.6px;color:#1a1a1a;">0</span>
<span class="t" id="t44" style="left:1117.5px;top:251.2px;font-size:11.6px;color:#1a1a1a;">0</span>
<svg style="left:0px;top:0px;pointer-events:none;" width="1200" height="847" viewBox="0 0 1200 847"><rect x="1048" y="231" width="51.600" height="52" fill="none" stroke="#2b2b2b" stroke-width="1"/><path d="M1073.700 221v10M1073.700 283v9.500M1038 257h10M1099.600 257h9.800" stroke="#111" stroke-width="1.300"/><circle cx="1073.7" cy="231" r="4" fill="#111"/><circle cx="1073.7" cy="283" r="4" fill="#111"/><circle cx="1048" cy="257" r="4" fill="#111"/><circle cx="1099.6" cy="257" r="4" fill="#111"/><path d="M1056 253.200l3.800 3.800-3.800 3.800M1061 253.200l3.800 3.800-3.800 3.800" fill="none" stroke="#222" stroke-width="1"/><path d="M1091.500 253.200l-3.800 3.800 3.800 3.800M1086.500 253.200l-3.800 3.800 3.800 3.800" fill="none" stroke="#222" stroke-width="1"/><path d="M1069.900 239.600l3.800 3.800 3.800-3.800M1069.900 244.400l3.800 3.800 3.800-3.800" fill="none" stroke="#222" stroke-width="1"/><path d="M1069.900 274.600l3.800-3.800 3.800 3.800M1069.900 269.800l3.800-3.800 3.800 3.800" fill="none" stroke="#222" stroke-width="1"/><rect x="969.800" y="215.400" width="3.700" height="83.400" rx="1.800" fill="#c8c8c8"/><rect x="1031.700" y="322.600" width="84" height="3.700" rx="1.800" fill="#c8c8c8"/><circle cx="971.200" cy="257.200" r="7.200" fill="#fcfcfc" stroke="#333" stroke-width=".9"/><circle cx="1073.400" cy="324.300" r="7.200" fill="#fcfcfc" stroke="#333" stroke-width=".9"/></svg>
<span class="t" id="t45" style="left:966.5px;top:254.2px;font-size:7.54px;color:#333;letter-spacing:0.005px;">50</span>
<span class="t" id="t46" style="left:1068.7px;top:321.2px;font-size:7.54px;color:#333;letter-spacing:0.005px;">50</span>
<svg style="left:968.4px;top:356.8px;" width="7.5" height="4.5" viewBox="0 0 7.5 4.5"><path d="M.5 .5 3.600 3.600 6.700 .5" fill="none" stroke="#5a5a5a" stroke-width="1"/></svg>
<span class="t" id="t47" style="left:979.7px;top:353.2px;font-size:11.79px;color:#1a1a1a;letter-spacing:0.110px;">Constraints</span>
<span class="t" id="t48" style="left:982.1px;top:370.2px;font-size:11.79px;color:#1a1a1a;letter-spacing:0.294px;">Left <span style="font-family:DejaVu Sans,sans-serif;font-size:9.500px;position:relative;top:-.5px;">→</span> LeftOf <b>parent</b> <span style="color:#999">(0dp)</span></span>
<svg style="left:966px;top:369.7px;" width="12" height="12" viewBox="0 0 12 12"><path d="M1.700 1.800h1.600c1.700 0 2 1.200 2 2.600v1.600c0 1.600.500 3 2.200 3.600l2.600 .9" fill="none" stroke="#7f96a5" stroke-width="1.400"/><circle cx="1.800" cy="1.800" r="1.700" fill="#7f96a5"/><circle cx="10.200" cy="10.200" r="1.700" fill="#7f96a5"/></svg>
<span class="t" id="t49" style="left:982.1px;top:388.2px;font-size:11.79px;color:#1a1a1a;letter-spacing:0.191px;">Right <span style="font-family:DejaVu Sans,sans-serif;font-size:9.500px;position:relative;top:-.5px;">→</span> RightOf <b>parent</b> <span style="color:#999">(0dp)</span></span>
<svg style="left:966px;top:387.0px;" width="12" height="12" viewBox="0 0 12 12"><path d="M1.700 1.800h1.600c1.700 0 2 1.200 2 2.600v1.600c0 1.600.500 3 2.200 3.600l2.600 .9" fill="none" stroke="#7f96a5" stroke-width="1.400"/><circle cx="1.800" cy="1.800" r="1.700" fill="#7f96a5"/><circle cx="10.200" cy="10.200" r="1.700" fill="#7f96a5"/></svg>
<span class="t" id="t50" style="left:982.1px;top:405.2px;font-size:11.79px;color:#1a1a1a;letter-spacing:0.232px;">Top <span style="font-family:DejaVu Sans,sans-serif;font-size:9.500px;position:relative;top:-.5px;">→</span> TopOf <b>parent</b> <span style="color:#999">(0dp)</span></span>
<svg style="left:966px;top:404.3px;" width="12" height="12" viewBox="0 0 12 12"><path d="M1.700 1.800h1.600c1.700 0 2 1.200 2 2.600v1.600c0 1.600.500 3 2.200 3.600l2.600 .9" fill="none" stroke="#7f96a5" stroke-width="1.400"/><circle cx="1.800" cy="1.800" r="1.700" fill="#7f96a5"/><circle cx="10.200" cy="10.200" r="1.700" fill="#7f96a5"/></svg>
<span class="t" id="t51" style="left:982.1px;top:422.2px;font-size:11.79px;color:#1a1a1a;letter-spacing:0.273px;">Bottom <span style="font-family:DejaVu Sans,sans-serif;font-size:9.500px;position:relative;top:-.5px;">→</span> BottomOf <b>parent</b> <span style="color:#999">(0dp)</span></span>
<svg style="left:966px;top:421.6px;" width="12" height="12" viewBox="0 0 12 12"><path d="M1.700 1.800h1.600c1.700 0 2 1.200 2 2.600v1.600c0 1.600.500 3 2.200 3.600l2.600 .9" fill="none" stroke="#7f96a5" stroke-width="1.400"/><circle cx="1.800" cy="1.800" r="1.700" fill="#7f96a5"/><circle cx="10.200" cy="10.200" r="1.700" fill="#7f96a5"/></svg>
<div style="left:963.7px;top:440px;width:220.70000000000005px;height:1px;background:#d1d1d1;"></div>
<span class="t" id="t52" style="left:966.5px;top:451.2px;font-size:9.84px;color:#1a1a1a;letter-spacing:0.072px;">layout_width</span>
<div style="left:1054px;top:448.1px;width:119px;height:15.199999999999989px;background:#ffffff;border:1px solid #c4c4c4;border-radius:2.5px;"></div>
<div style="left:1153.5px;top:448.6px;width:1px;height:14.199999999999989px;background:#c4c4c4;"></div>
<svg style="left:1160.05px;top:453.90000000000003px;" width="7" height="4.2" viewBox="0 0 7 4.2"><path d="M0 0h7L3.500 4.200z" fill="#4d4d4d"/></svg>
<span class="t" id="t53" style="left:1058.5px;top:450.2px;font-size:11.89px;color:#1a1a1a;letter-spacing:0.084px;">wrap_content</span>
<div style="left:1178.5px;top:449.1px;width:4px;height:13.199999999999989px;background:transparent;border:1px solid #c8c8c8;border-radius:2px;"></div>
<span class="t" id="t54" style="left:966.5px;top:471.2px;font-size:9.84px;color:#1a1a1a;letter-spacing:0.040px;">layout_height</span>
<div style="left:1054px;top:468.8px;width:119px;height:14.800000000000011px;background:#ffffff;border:1px solid #c4c4c4;border-radius:2.5px;"></div>
<div style="left:1153.5px;top:469.3px;width:1px;height:13.800000000000011px;background:#c4c4c4;"></div>
<svg style="left:1160.05px;top:474.40000000000003px;" width="7" height="4.2" viewBox="0 0 7 4.2"><path d="M0 0h7L3.500 4.200z" fill="#4d4d4d"/></svg>
<span class="t" id="t55" style="left:1058.5px;top:471.2px;font-size:11.89px;color:#1a1a1a;letter-spacing:0.084px;">wrap_content</span>
<div style="left:1178.5px;top:469.8px;width:4px;height:12.800000000000011px;background:transparent;border:1px solid #c8c8c8;border-radius:2px;"></div>
<span class="t" id="t56" style="left:966.5px;top:492.2px;font-size:9.84px;color:#1a1a1a;letter-spacing:0.114px;">visibility</span>
<div style="left:1054px;top:489.2px;width:119px;height:14.900000000000034px;background:#ffffff;border:1px solid #c4c4c4;border-radius:2.5px;"></div>
<div style="left:1153.5px;top:489.7px;width:1px;height:13.900000000000034px;background:#c4c4c4;"></div>
<svg style="left:1160.05px;top:494.84999999999997px;" width="7" height="4.2" viewBox="0 0 7 4.2"><path d="M0 0h7L3.500 4.200z" fill="#4d4d4d"/></svg>
<span class="t" id="t57" style="left:977.4px;top:513.2px;font-size:9.84px;color:#1a1a1a;letter-spacing:0.024px;">visibility</span>
<div style="left:1054px;top:510px;width:119px;height:14.899999999999977px;background:#ffffff;border:1px solid #c4c4c4;border-radius:2.5px;"></div>
<div style="left:1153.5px;top:510.5px;width:1px;height:13.899999999999977px;background:#c4c4c4;"></div>
<svg style="left:1160.05px;top:515.6500000000001px;" width="7" height="4.2" viewBox="0 0 7 4.2"><path d="M0 0h7L3.500 4.200z" fill="#4d4d4d"/></svg>
<svg style="left:966.3px;top:512.5px;" width="8.5" height="9.5" viewBox="0 0 9 10"><path d="M.6 8.300 4.300 4.600A2.400 2.400 0 0 1 7.300 1.300L5.800 2.800l.9.900 1.500-1.500A2.400 2.400 0 0 1 5.200 5.500L1.500 9.200z" fill="#5a5a5a"/></svg>
<div style="left:960.5px;top:530.8px;width:227.5px;height:21.5px;background:#f2f2f2;"></div>
<div style="left:960.5px;top:530.8px;width:227.5px;height:1px;background:#d9d9d9;"></div>
<div style="left:960.5px;top:552.3px;width:227.5px;height:1px;background:#d9d9d9;"></div>
<svg style="left:967px;top:538.3499999999999px;" width="4.5" height="7.5" viewBox="0 0 4.5 7.5"><path d="M.5 .5 3.600 3.600 .5 6.700" fill="none" stroke="#5a5a5a" stroke-width="1"/></svg>
<span class="t" id="t58" style="left:975px;top:538.2px;font-size:11.59px;color:#1a1a1a;font-weight:700;letter-spacing:0.004px;">Transforms</span>
<div style="left:960.5px;top:552.3px;width:227.5px;height:21.300000000000068px;background:#f2f2f2;"></div>
<div style="left:960.5px;top:552.3px;width:227.5px;height:1px;background:#d9d9d9;"></div>
<div style="left:960.5px;top:573.6px;width:227.5px;height:1px;background:#d9d9d9;"></div>
<svg style="left:966.5px;top:561.25px;" width="7.5" height="4.5" viewBox="0 0 7.5 4.5"><path d="M.5 .5 3.600 3.600 6.700 .5" fill="none" stroke="#5a5a5a" stroke-width="1"/></svg>
<span class="t" id="t59" style="left:976.5px;top:559.2px;font-size:11.84px;color:#1a1a1a;font-weight:700;letter-spacing:0.003px;">Common Attributes</span>
<span class="t" id="t60" style="left:966.9px;top:584.2px;font-size:9.84px;color:#1a1a1a;letter-spacing:0.039px;">text</span>
<div style="left:1054.2px;top:581px;width:118.59999999999991px;height:14.5px;background:#ffffff;border:1px solid #c4c4c4;border-radius:0px;"></div>
<div style="left:1178.5px;top:581.6px;width:4px;height:13.199999999999932px;background:transparent;border:1px solid #c8c8c8;border-radius:2px;"></div>
<span class="t" id="t61" style="left:1056.2px;top:583.2px;font-size:11.89px;color:#1a1a1a;letter-spacing:0.053px;">Hello World!</span>
<svg style="left:966.3px;top:604.3px;" width="8.5" height="9.5" viewBox="0 0 9 10"><path d="M.6 8.300 4.300 4.600A2.400 2.400 0 0 1 7.300 1.300L5.800 2.800l.9.900 1.500-1.500A2.400 2.400 0 0 1 5.200 5.500L1.500 9.200z" fill="#5a5a5a"/></svg>
<span class="t" id="t62" style="left:977.1px;top:605.2px;font-size:9.84px;color:#1a1a1a;letter-spacing:0.039px;">text</span>
<div style="left:1054.2px;top:601.8px;width:118.59999999999991px;height:14.400000000000091px;background:#ffffff;border:1px solid #c4c4c4;border-radius:0px;"></div>
<div style="left:1178.5px;top:602.4px;width:4px;height:13.200000000000045px;background:transparent;border:1px solid #c8c8c8;border-radius:2px;"></div>
<span class="t" id="t63" style="left:966.9px;top:625.2px;font-size:9.84px;color:#1a1a1a;letter-spacing:0.066px;">contentDescription</span>
<div style="left:1054.2px;top:622.4px;width:118.59999999999991px;height:14.399999999999977px;background:#ffffff;border:1px solid #c4c4c4;border-radius:0px;"></div>
<div style="left:1178.5px;top:623px;width:4px;height:13.200000000000045px;background:transparent;border:1px solid #c8c8c8;border-radius:2px;"></div>
<svg style="left:967px;top:646.5px;" width="4.5" height="7.5" viewBox="0 0 4.5 7.5"><path d="M.5 .5 3.600 3.600 .5 6.700" fill="none" stroke="#5a5a5a" stroke-width="1"/></svg>
<span class="t" id="t64" style="left:974.5px;top:645.2px;font-size:9.71px;color:#1a1a1a;letter-spacing:0.001px;">textAppearance</span>
<div style="left:1054.2px;top:642.7px;width:118.59999999999991px;height:14.799999999999955px;background:#f7f7f7;border:1px solid #c4c4c4;border-radius:2.5px;"></div>
<div style="left:1153.7px;top:643.2px;width:1px;height:13.799999999999955px;background:#c4c4c4;"></div>
<svg style="left:1160.05px;top:648.3000000000001px;" width="7" height="4.2" viewBox="0 0 7 4.2"><path d="M0 0h7L3.500 4.200z" fill="#4d4d4d"/></svg>
<div style="left:1178.5px;top:643.5px;width:4px;height:13.299999999999955px;background:transparent;border:1px solid #c8c8c8;border-radius:2px;"></div>
<div style="left:1055px;top:643.500px;width:98px;height:13px;overflow:hidden;"><span style="position:absolute;left:5px;top:1.100px;font-size:11.600px;line-height:1;color:#9a9a9a;white-space:pre;letter-spacing:.35px;will-change:transform;">@android:style/TextAppearance</span></div>
<span class="t" id="t65" style="left:966.9px;top:667.2px;font-size:9.24px;color:#1a1a1a;letter-spacing:-0.002px;">alpha</span>
<div style="left:1054.2px;top:663.5px;width:118.59999999999991px;height:14.899999999999977px;background:#ffffff;border:1px solid #c4c4c4;border-radius:0px;"></div>
<div style="left:1178.5px;top:664.2px;width:4px;height:13.599999999999909px;background:transparent;border:1px solid #c8c8c8;border-radius:2px;"></div>
<div style="left:960.5px;top:684.3px;width:227.5px;height:21.200000000000045px;background:#f2f2f2;"></div>
<div style="left:960.5px;top:684.3px;width:227.5px;height:1px;background:#d9d9d9;"></div>
<div style="left:960.5px;top:705.5px;width:227.5px;height:1px;background:#d9d9d9;"></div>
<svg style="left:966.5px;top:693.1999999999999px;" width="7.5" height="4.5" viewBox="0 0 7.5 4.5"><path d="M.5 .5 3.600 3.600 6.700 .5" fill="none" stroke="#5a5a5a" stroke-width="1"/></svg>
<span class="t" id="t66" style="left:976.5px;top:690.2px;font-size:12.02px;color:#1a1a1a;font-weight:700;">All Attributes</span>
<span class="t" id="t67" style="left:971.3px;top:711.2px;font-size:9.84px;color:#1a1a1a;letter-spacing:0.012px;">accessibilityLiv...</span>
<div style="left:960.5px;top:726.12px;width:227.5px;height:1px;background:#e0e0e0;"></div>
<div style="left:1178.8px;top:708.9px;width:3.8px;height:14px;background:transparent;border:1px solid #c8c8c8;border-radius:2px;"></div>
<span class="t" id="t68" style="left:971.3px;top:733.2px;font-size:9.28px;color:#1a1a1a;letter-spacing:0.006px;">alpha</span>
<div style="left:960.5px;top:746.74px;width:227.5px;height:1px;background:#e0e0e0;"></div>
<div style="left:1178.8px;top:729.52px;width:3.8px;height:14px;background:transparent;border:1px solid #c8c8c8;border-radius:2px;"></div>
<span class="t" id="t69" style="left:971.3px;top:752.2px;font-size:9.66px;color:#1a1a1a;letter-spacing:-0.002px;">autoLink</span>
<div style="left:960.5px;top:767.36px;width:227.5px;height:1px;background:#e0e0e0;"></div>
<div style="left:1178.8px;top:750.14px;width:3.8px;height:14px;background:transparent;border:1px solid #c8c8c8;border-radius:2px;"></div>
<span class="t" id="t70" style="left:971.3px;top:773.2px;font-size:9.39px;color:#1a1a1a;letter-spacing:0.005px;">autoSizeMaxTe...</span>
<div style="left:960.5px;top:787.98px;width:227.5px;height:1px;background:#e0e0e0;"></div>
<div style="left:1178.8px;top:770.76px;width:3.8px;height:14px;background:transparent;border:1px solid #c8c8c8;border-radius:2px;"></div>
<span class="t" id="t71" style="left:971.3px;top:794.2px;font-size:9.38px;color:#1a1a1a;">autoSizeMinTex...</span>
<div style="left:960.5px;top:808.6px;width:227.5px;height:1px;background:#e0e0e0;"></div>
<div style="left:1178.8px;top:791.38px;width:3.8px;height:14px;background:transparent;border:1px solid #c8c8c8;border-radius:2px;"></div>
<span class="t" id="t72" style="left:971.3px;top:814.2px;font-size:9.55px;color:#1a1a1a;letter-spacing:-0.000px;">autoSizePreset...</span>
<div style="left:960.5px;top:829.22px;width:227.5px;height:1px;background:#e0e0e0;"></div>
<div style="left:1178.8px;top:812.0px;width:3.8px;height:14px;background:transparent;border:1px solid #c8c8c8;border-radius:2px;"></div>
<span class="t" id="t73" style="left:971.3px;top:835.2px;font-size:9.51px;color:#1a1a1a;letter-spacing:0.002px;">autoSizeStepGr...</span>
<div style="left:960.5px;top:849.84px;width:227.5px;height:1px;background:#e0e0e0;"></div>
<div style="left:1178.8px;top:832.62px;width:3.8px;height:14px;background:transparent;border:1px solid #c8c8c8;border-radius:2px;"></div>
<div style="left:1051px;top:705.5px;width:1px;height:141.5px;background:#dcdcdc;"></div>
<div style="left:1153.5px;top:710px;width:1px;height:12px;background:#c4c4c4;"></div>
<svg style="left:1159.5px;top:715px;" width="7" height="4.2" viewBox="0 0 7 4.2"><path d="M0 0h7L3.500 4.200z" fill="#4d4d4d"/></svg>
<svg style="left:963px;top:752.8px;" width="4.5" height="7.5" viewBox="0 0 4.5 7.5"><path d="M.5 .5 3.600 3.600 .5 6.700" fill="none" stroke="#5a5a5a" stroke-width="1"/></svg>
<svg style="left:1057.5px;top:752.5px;" width="8.5" height="9.5" viewBox="0 0 8.5 9.5"><path d="M.6 0v9.300" stroke="#4d4d4d" stroke-width="1.200"/><path d="M1.200 .5c1.500-.8 2.500.800 3.700.4s2-.6 3-.2v4.500c-1-.4-1.800-.2-3 .2s-2.200-1.200-3.700-.4z" fill="#4d4d4d"/></svg>
</div></body></html>
